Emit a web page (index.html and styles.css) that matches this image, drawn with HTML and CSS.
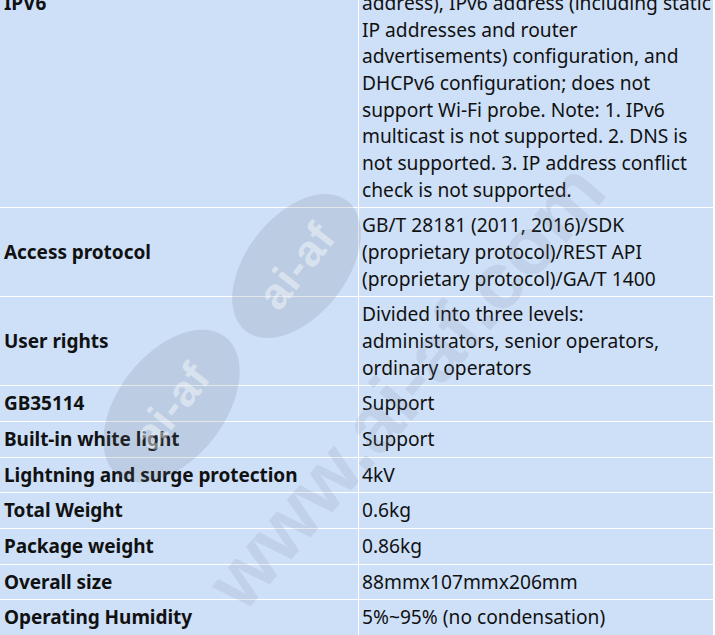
FILE: index.html
```html
<!DOCTYPE html>
<html lang="en">
<head>
<meta charset="utf-8">
<title>Specifications</title>
<link rel="stylesheet" href="styles.css">
</head>
<body>
<div class="page">
  <div class="spec">
    <div class="spec-label spec-label--top">IPV6</div>
    <div class="spec-value">address), IPv6 address (including static IP addresses and router advertisements) configuration, and DHCPv6 configuration; does not support Wi-Fi probe. Note: 1. IPv6 multicast is not supported. 2. DNS is not supported. 3. IP address conflict check is not supported.</div>

    <div class="spec-label">Access protocol</div>
    <div class="spec-value">GB/T 28181 (2011, 2016)/SDK (proprietary protocol)/REST API (proprietary protocol)/GA/T 1400</div>

    <div class="spec-label">User rights</div>
    <div class="spec-value">Divided into three levels: administrators, senior operators, ordinary operators</div>

    <div class="spec-label">GB35114</div>
    <div class="spec-value">Support</div>

    <div class="spec-label">Built-in white light</div>
    <div class="spec-value">Support</div>

    <div class="spec-label">Lightning and surge protection</div>
    <div class="spec-value">4kV</div>

    <div class="spec-label">Total Weight</div>
    <div class="spec-value">0.6kg</div>

    <div class="spec-label">Package weight</div>
    <div class="spec-value">0.86kg</div>

    <div class="spec-label">Overall size</div>
    <div class="spec-value">88mmx107mmx206mm</div>

    <div class="spec-label">Operating Humidity</div>
    <div class="spec-value">5%~95% (no condensation)</div>
  </div>

  <div class="watermark" aria-hidden="true">
    <div class="wm-badge wm-badge--one"><span>ai-af</span></div>
    <div class="wm-badge wm-badge--two"><span>ai-af</span></div>
    <div class="wm-url">www.ai-af.com</div>
  </div>
</div>
</body>
</html>
```
FILE: styles.css
```css
html, body {
  margin: 0;
  padding: 0;
  background: #ffffff;
}

.page {
  position: relative;
  width: 715px;
  height: 635px;
  overflow: hidden;
  font-family: "Noto Sans", "Open Sans", sans-serif;
  font-size: 19.2px;
  line-height: 26.67px;
  color: #111111;
}

.spec {
  display: grid;
  grid-template-columns: 358px 354px;
  column-gap: 1px;
  row-gap: 1px;
  width: 713px;
  padding-right: 1px;
  background: #ffffff;
  margin-top: -14px;
}

.spec-label,
.spec-value {
  display: flex;
  align-items: center;
  background: #cde0f8;
  padding: 4px 4px;
}

.spec-label {
  font-weight: 700;
  font-size: 19px;
  letter-spacing: -0.05px;
}

.spec-label--top {
  align-items: flex-start;
}

.spec-value {
  padding-left: 3px;
  padding-right: 0;
}

/* watermark overlay */
.watermark {
  position: absolute;
  inset: 0;
  pointer-events: none;
}

.wm-badge {
  position: absolute;
  display: flex;
  align-items: center;
  justify-content: center;
  border-radius: 50%;
  background: rgba(105, 115, 135, 0.18);
  transform: rotate(-52deg);
}

.wm-badge span {
  font-family: "Liberation Sans", sans-serif;
  font-weight: 700;
  font-size: 44px;
  color: rgba(255, 255, 255, 0.45);
  letter-spacing: 1px;
}

.wm-badge--one {
  width: 165px;
  height: 100px;
  left: 214px;
  top: 216px;
}

.wm-badge--two {
  width: 175px;
  height: 106px;
  left: 84px;
  top: 353px;
}

.wm-url {
  position: absolute;
  left: 120px;
  top: 330px;
  width: 600px;
  font-family: "Liberation Sans", sans-serif;
  font-weight: 700;
  font-size: 80px;
  line-height: 80px;
  color: rgba(110, 120, 140, 0.14);
  transform: rotate(-49deg);
  transform-origin: 50% 50%;
  white-space: nowrap;
}
```
